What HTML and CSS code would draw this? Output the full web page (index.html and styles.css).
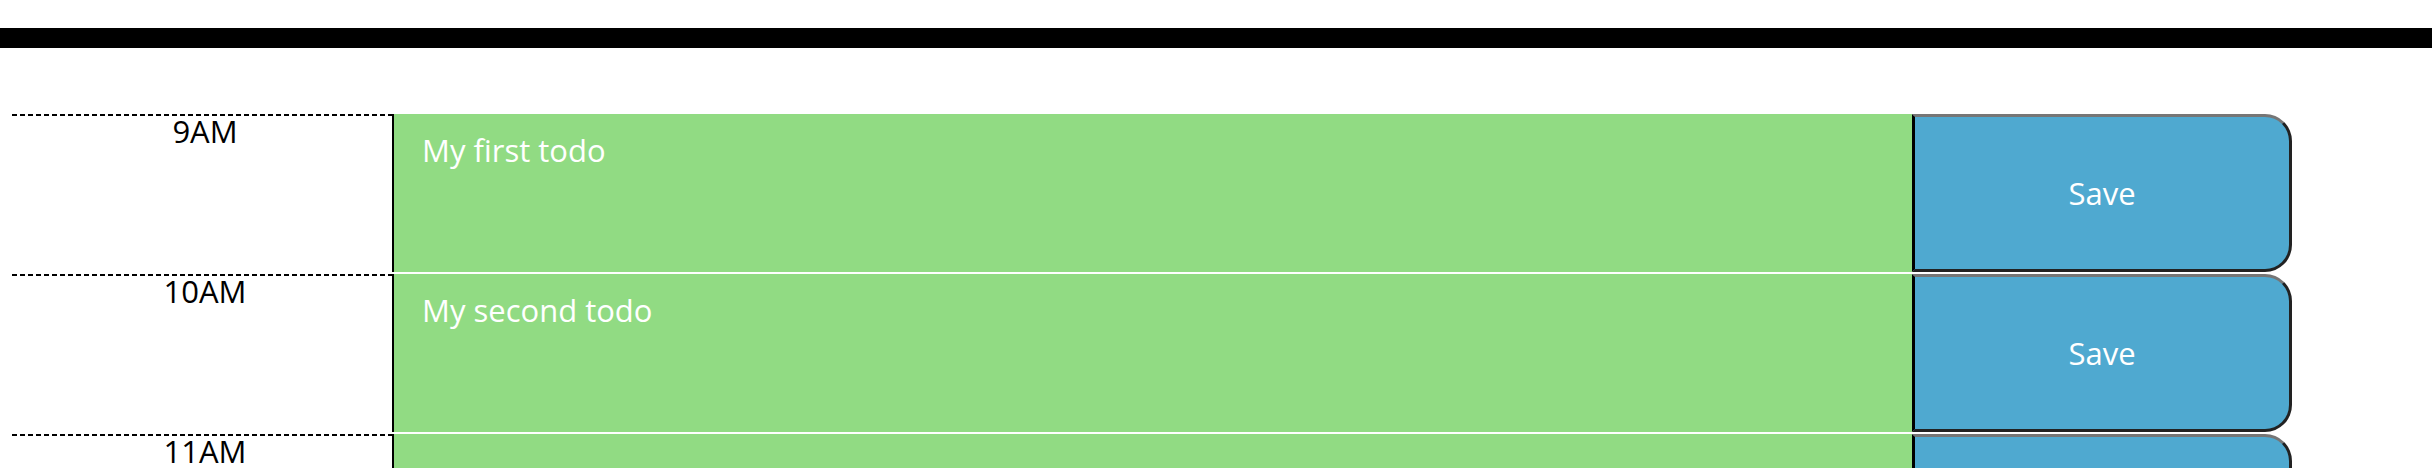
FILE: index.html
```html
<!DOCTYPE html>
<html lang="en">
<head>
<meta charset="utf-8">
<title>Work Day Scheduler</title>
<link rel="stylesheet" href="styles.css">
</head>
<body>
<header class="jumbotron"></header>
<main class="container">
  <div class="row time-block">
    <div class="hour">9AM</div>
    <textarea class="description future">My first todo</textarea>
    <button class="saveBtn" type="button">Save</button>
  </div>
  <div class="row time-block">
    <div class="hour">10AM</div>
    <textarea class="description future">My second todo</textarea>
    <button class="saveBtn" type="button">Save</button>
  </div>
  <div class="row time-block">
    <div class="hour">11AM</div>
    <textarea class="description future"></textarea>
    <button class="saveBtn" type="button">Save</button>
  </div>
</main>
</body>
</html>
```
FILE: styles.css
```css
html, body {
  margin: 0;
  padding: 0;
  background: #ffffff;
}

body {
  font-family: "Open Sans", "Noto Sans", sans-serif;
  font-size: 31px;
  line-height: 1;
  color: #000;
  overflow: hidden;
}

.jumbotron {
  height: 28px;
  border-bottom: 20px solid #000;
  margin: 0 0 64px 0;
}

.container {
  margin-left: 12px;
  width: 2280px;
}

.row {
  display: grid;
  grid-template-columns: 380px 1520px 380px;
  height: 158px;
  border-top: 2px solid #fff;
}

.hour {
  padding-top: 2px;
  padding-left: 6px;
  text-align: center;
  background-image: repeating-linear-gradient(to right, #000 0 5px, transparent 5px 8px);
  background-size: 100% 2px;
  background-repeat: no-repeat;
  background-position: top left;
  color: #000;
}

.description {
  margin: 0;
  border: 0;
  border-left: 2px solid #000;
  padding: 21px 28px 0 28px;
  font: inherit;
  line-height: 1;
  color: #fff;
  resize: none;
  outline: none;
  white-space: pre-wrap;
  overflow: hidden;
}

.future {
  background-color: #91db83;
}

.saveBtn {
  margin: 0;
  padding: 0;
  font-family: "Open Sans", "Noto Sans", sans-serif;
  font-size: 31px;
  line-height: normal;
  color: #fff;
  background-color: #4fa9d0;
  border-style: solid;
  border-width: 3px;
  border-top-color: #767676;
  border-left-color: #000;
  border-right-color: #222;
  border-bottom-color: #222;
  border-radius: 0 27px 27px 0;
  cursor: pointer;
}
```
